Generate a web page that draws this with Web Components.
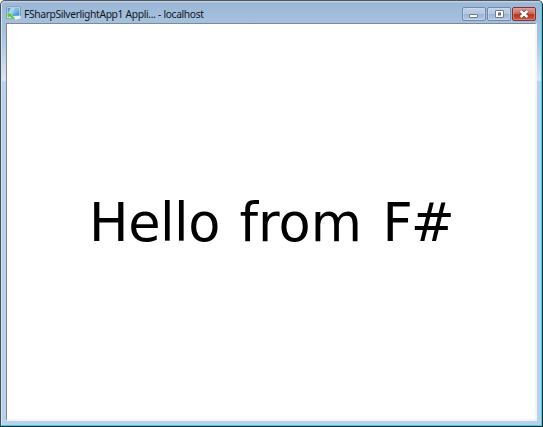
<!DOCTYPE html>
<html lang="en"><head><meta charset="utf-8"><title>FSharpSilverlightApp1</title>
<style>html,body{margin:0;height:100%;overflow:hidden}.word{letter-spacing:0}.mark{letter-spacing:-2px;margin-left:1px}</style></head>
<body>
<app-window><window-title slot="title">FSharpSilverlightApp1 Appli... - localhost</window-title><window-controls slot="controls"></window-controls><hello-message>Hello <span class="word">from</span> <span class="mark">F#</span></hello-message></app-window>
<script>
const define=(name,html)=>customElements.define(name,class extends HTMLElement{
 constructor(){super();this.attachShadow({mode:'open'}).innerHTML=html;}
});
define('window-icon',`<style>:host{display:block;width:16px;height:16px;flex:none}svg{display:block}</style>
<svg width="16" height="16" viewBox="0 0 16 16"><defs><linearGradient id="s" x2="1" y2="1"><stop stop-color="#3c91d0"/><stop offset=".5" stop-color="#80c2ed"/><stop offset="1" stop-color="#2875bd"/></linearGradient></defs>
<path d="M.5 1 14.5 1 14.5 11 11 13 .5 12.5Z" fill="#e6eef3" stroke="#6d8699" stroke-width=".7"/><path d="M1.5 2H13.5V9.5L1.5 10.5Z" fill="url(#s)"/><path d="M4.5 2H9.5L5.5 7.5 2.5 7.5Z" fill="#b8e0f5" opacity=".8"/><path d="M8.5 11.5 14.5 10 15 12 9.5 14Z" fill="#edf2f5"/><path d="M1 7 6.5 7.5 5.3 8.9 9 12 7 13.5 3.7 10.5 2 12Z" fill="#55c63c" stroke="#c9edb9" stroke-width=".5"/></svg>`);
define('window-title',`<style>:host{display:flex;align-items:center;height:18px;gap:2px;margin-left:-1px;font:10.3px/18px "Noto Sans","Open Sans",sans-serif;color:#101720;white-space:nowrap;letter-spacing:-.37px;word-spacing:.2px}span{display:block;padding-top:1px}</style><window-icon></window-icon><span><slot></slot></span>`);
define('window-controls',`<style>:host{display:flex;gap:1px}button{box-sizing:border-box;width:24px;height:14px;padding:0;border:1px solid #7489a6;border-radius:2px;background:linear-gradient(#bfd2e8,#b1c8e2 48%,#98b4d4 50%,#b0cae6);box-shadow:inset 0 0 0 1px #cbdcef99}button.close{border-color:#71383d;background:linear-gradient(#dc9e92,#ca6557 48%,#b83120 50%,#cf5540);box-shadow:inset 0 0 0 1px #e7a69a88}svg{display:block;width:22px;height:12px}</style>
<button aria-label="Minimize"><svg viewBox="0 0 22 12"><rect x="6.5" y="6.5" width="8" height="3" rx=".5" fill="#fff" stroke="#737b8b"/></svg></button>
<button aria-label="Maximize"><svg viewBox="0 0 22 12"><rect x="7.5" y="2.5" width="8" height="7" rx=".5" fill="#fff" stroke="#737b8b"/><rect x="10.5" y="5" width="2" height="2" fill="#9cb3cf" stroke="#626b7d"/></svg></button>
<button class="close" aria-label="Close"><svg viewBox="0 0 22 12"><path d="m7.7 3.2 6.6 5.6m0-5.6L7.7 8.8" fill="none" stroke="#704750" stroke-width="4.2"/><path d="m7.6 3 6.8 6m0-6L7.6 9" fill="none" stroke="#fff" stroke-width="2.4"/></svg></button>`);
define('hello-message',`<style>:host{display:block;font:52.6px/64px "DejaVu Sans",sans-serif;color:#000;white-space:nowrap;letter-spacing:-.5px;word-spacing:3.4px;padding-top:2px}</style><slot></slot>`);
define('app-window',`<style>:host{box-sizing:border-box;display:grid;grid-template-rows:21px 1fr;width:543px;height:427px;padding:1px;border-radius:5px 5px 0 0;border:solid;border-width:1px;border-color:#535558 #08333c #08333c #4b5158;background:linear-gradient(#c9dcef 0,#9cb7d6 2px,#a5c0df 19px,#a5c0dd 22px,#a7c1df 35px,#d9e6f4 79px,#b9d1ea 81px,#b9d1ea);box-shadow:inset -1px -1px #48c9e4,inset 1px 0 #d5e4f2}
header{display:flex;align-items:center;justify-content:space-between;padding:2px 5px 0 5px}main{box-sizing:border-box;margin:0 4px 4px;border:solid;border-width:1px 2px 2px 1px;border-color:#828890 #f4f4f4 #f4f4f4 #84898f;background:white;display:grid;place-items:center;overflow:hidden}</style><header><slot name="title"></slot><slot name="controls"></slot></header><main><slot></slot></main>`);
</script></body></html>
